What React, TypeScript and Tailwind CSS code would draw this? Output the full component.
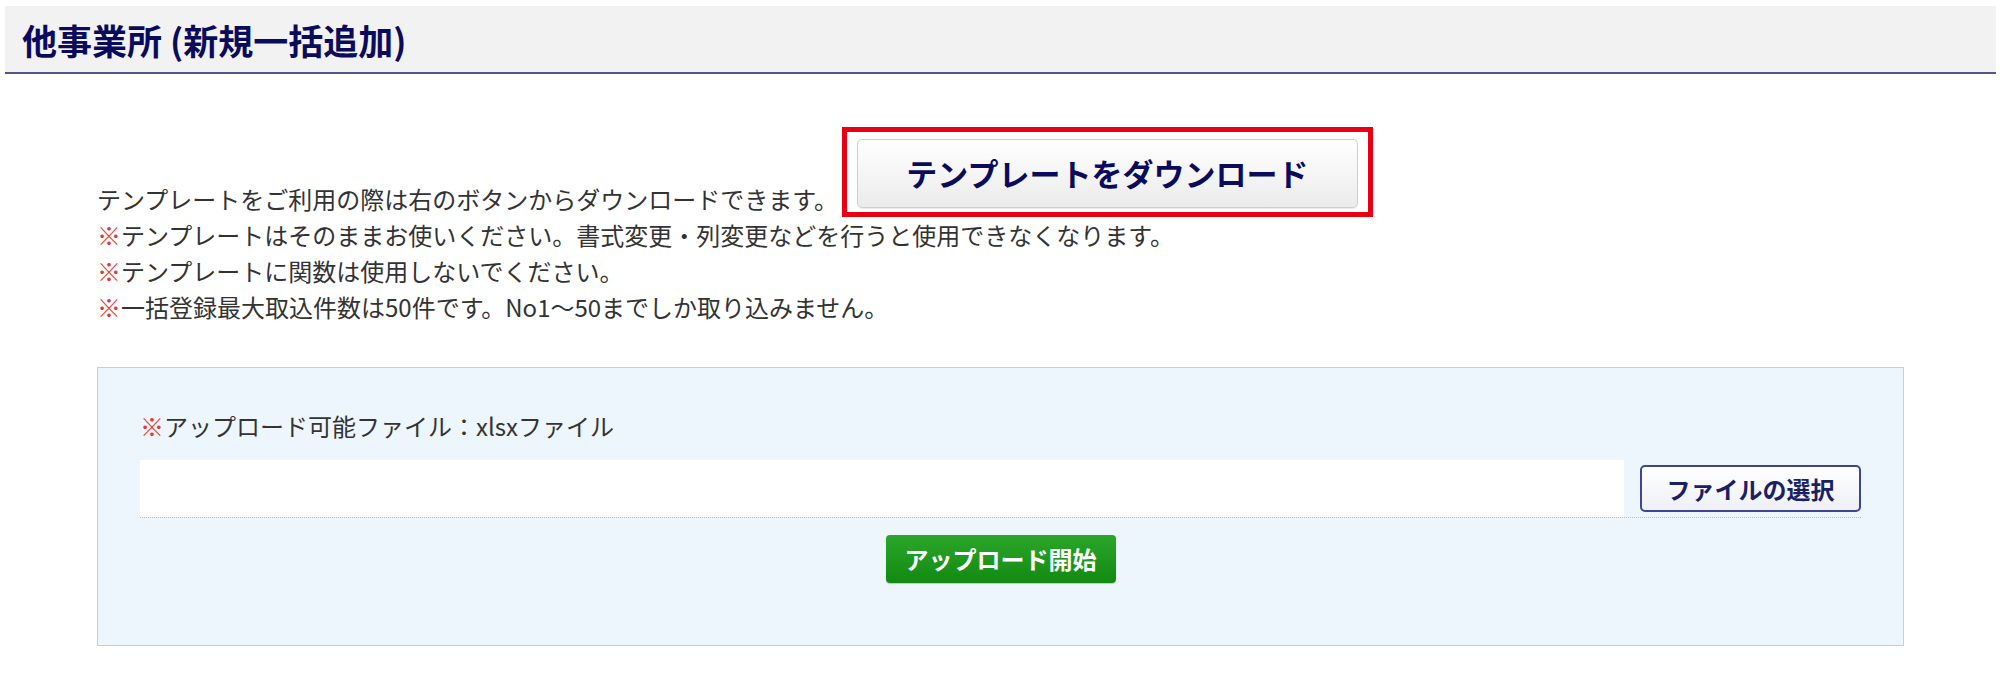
import React from 'react';

const FONT = "font-['Meiryo','Noto_Sans_CJK_JP','Noto_Sans',sans-serif]";

function Note({ children }: { children: React.ReactNode }) {
  return (
    <p className="leading-[36px]">
      <span className="text-[#e53935]">※</span>
      {children}
    </p>
  );
}

export default function App() {
  return (
    <div className={`min-h-screen bg-white text-[#333333] ${FONT}`}>
      {/* 見出し */}
      <div className="ml-[5px] mr-[4px] mt-[6px] flex h-[68px] items-center border-b-2 border-[#55558a] bg-[#f2f2f2] pl-[17px]">
        <h1 className="text-[35px] font-bold leading-none text-[#0b0b5e]">
          他事業所 (新規一括追加)
        </h1>
      </div>

      <div className="pl-[97px] pr-[96px]">
        {/* 注意書き */}
        <div className="mt-[53px] text-[24px]">
          <div className="flex items-end">
            <p className="leading-[36px]">
              テンプレートをご利用の際は右のボタンからダウンロードできます。
            </p>
            <div className="ml-[4px] border-[5px] border-[#e60012] pb-[4px] pl-[10px] pr-[10px] pt-[7px]">
              <button
                type="button"
                className="flex h-[69px] w-[501px] items-center justify-center rounded-[5px] border border-[#cfcfcf] bg-gradient-to-b from-white to-[#ebebeb] text-[31px] font-bold text-[#0b0b5e] shadow-[0_1px_1px_rgba(0,0,0,0.08)]"
              >
                テンプレートをダウンロード
              </button>
            </div>
          </div>
          <Note>テンプレートはそのままお使いください。書式変更・列変更などを行うと使用できなくなります。</Note>
          <Note>テンプレートに関数は使用しないでください。</Note>
          <Note>一括登録最大取込件数は50件です。No1～50までしか取り込みません。</Note>
        </div>

        {/* アップロード */}
        <div className="mt-[42px] h-[279px] border border-[#c9cfd6] bg-[#edf5fd] px-[42px] pt-[40px]">
          <p className="text-[24px] leading-[36px]">
            <span className="text-[#e53935]">※</span>
            アップロード可能ファイル：xlsxファイル
          </p>
          <div className="mt-[16px] flex items-start gap-[16px] border-b border-dotted border-[#b8bcc2]">
            <div className="h-[57px] flex-1 bg-white" />
            <button
              type="button"
              className="mt-[5px] flex h-[47px] w-[221px] items-center justify-center rounded-[5px] border-2 border-[#3f4590] bg-gradient-to-b from-white to-[#eef0f6] text-[24px] font-bold text-[#1b1f66]"
            >
              ファイルの選択
            </button>
          </div>
          <div className="mt-[17px] flex justify-center">
            <button
              type="button"
              className="flex h-[48px] w-[230px] items-center justify-center rounded-[4px] bg-gradient-to-b from-[#2aa62a] to-[#128a12] text-[24px] font-bold text-white shadow-[0_1px_1px_rgba(0,0,0,0.2)]"
            >
              アップロード開始
            </button>
          </div>
        </div>
      </div>
    </div>
  );
}
